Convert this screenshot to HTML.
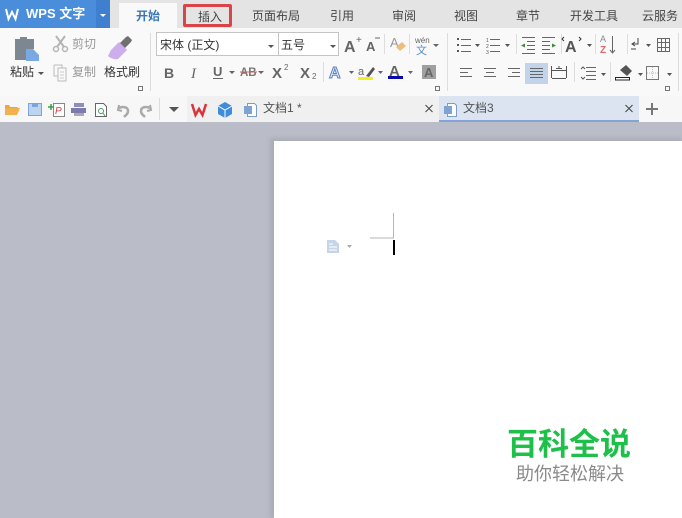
<!DOCTYPE html>
<html><head><meta charset="utf-8">
<style>
*{margin:0;padding:0;box-sizing:border-box}
html,body{width:682px;height:518px;overflow:hidden;background:#babdc8;font-family:"Liberation Sans","Noto Sans CJK SC",sans-serif}
.a{position:absolute}
.t{position:absolute;white-space:nowrap;font-size:12px;line-height:14px;color:#444}
svg{position:absolute;left:0;top:0}
#w{position:absolute;left:0;top:0;width:682px;height:518px;filter:blur(.3px)}
</style></head><body><div id="w">
<div class="a" style="left:0;top:0;width:682px;height:28px;background:#e4e4e4"></div>
<div class="a" style="left:0;top:0;width:96px;height:28px;background:#4a8ddb"></div>
<div class="a" style="left:96px;top:0;width:14px;height:28px;background:#3f7fcf"></div>
<div class="a" style="left:119px;top:3px;width:58px;height:25px;background:#f9f9f9"></div>
<div class="a" style="left:183px;top:4px;width:49px;height:23px;border:3px solid #d9434a;border-radius:2px;background:#e4e4e4"></div>
<div class="a" style="left:0;top:28px;width:682px;height:68px;background:#f9f9f9"></div>
<div class="a" style="left:157px;top:33px;width:181px;height:22px;background:#fff"></div>
<div class="a" style="left:0;top:96px;width:682px;height:26px;background:#f7f7f7"></div>
<div class="a" style="left:187px;top:96px;width:252px;height:26px;background:#f0f0f0"></div>
<div class="a" style="left:439px;top:96px;width:200px;height:26px;background:#dbe4f0;border-bottom:2px solid #86a3d8"></div>
<div class="a" style="left:0;top:122px;width:682px;height:396px;background:#babdc8"></div>
<div class="a" style="left:270px;top:138px;width:412px;height:380px;background:#a9acb5;filter:blur(2px)"></div>
<div class="a" style="left:274px;top:141px;width:408px;height:377px;background:#fff"></div>

<div class="t" style="left:26px;top:7px;color:#fff;font-size:13px;font-weight:bold">WPS 文字</div>
<div class="t" style="left:136px;top:9px;color:#3a76b8;font-weight:bold">开始</div>
<div class="t" style="left:198px;top:10px">插入</div>
<div class="t" style="left:252px;top:9px">页面布局</div>
<div class="t" style="left:330px;top:9px">引用</div>
<div class="t" style="left:392px;top:9px">审阅</div>
<div class="t" style="left:454px;top:9px">视图</div>
<div class="t" style="left:516px;top:9px">章节</div>
<div class="t" style="left:570px;top:9px">开发工具</div>
<div class="t" style="left:642px;top:9px">云服务</div>

<div class="t" style="left:10px;top:65px;color:#333">粘贴</div>
<div class="t" style="left:72px;top:37px;color:#999">剪切</div>
<div class="t" style="left:72px;top:65px;color:#999">复制</div>
<div class="t" style="left:104px;top:65px;color:#333">格式刷</div>
<div class="t" style="left:160px;top:38px;color:#333">宋体 (正文)</div>
<div class="t" style="left:281px;top:38px;color:#333">五号</div>
<div class="t" style="left:263px;top:101px;color:#555;font-size:12px">文档1 *</div>
<div class="t" style="left:463px;top:101px;color:#555;font-size:12px">文档3</div>
<div class="t" style="left:507px;top:426px;color:#1fc04a;font-size:31px;line-height:38px;font-weight:bold">百科全说</div>
<div class="t" style="left:516px;top:464px;color:#8a8a8a;font-size:18px;line-height:20px">助你轻松解决</div>

<svg width="682" height="518" viewBox="0 0 682 518" fill="none">
<!-- WPS logo -->
<path d="M6 9l2.500 10 3.500-7 3.500 7L18 9" stroke="#fff" stroke-width="2"/>
<path d="M100 14h6l-3 3z" fill="#fff"/>
<!-- font boxes -->
<rect x="156.500" y="32.500" width="122" height="23" stroke="#c4c4c4"/>
<rect x="278.500" y="32.500" width="60" height="23" stroke="#c4c4c4"/>
<path d="M268 45h6l-3 3zM330 45h6l-3 3zM38 72h6l-3 3z" fill="#555"/>
<!-- paste -->
<path d="M15 39h5v-2h7v2h7v10h-8v11h-11z" fill="#7d8791"/>
<path d="M26 49h7l6 6v6h-13z" fill="#7aa8e2"/>
<!-- scissors -->
<path d="M56 36l8 11M65 36l-8 11" stroke="#b4b4b4" stroke-width="2"/>
<circle cx="56" cy="49" r="2.500" stroke="#b4b4b4" stroke-width="1.500"/><circle cx="65" cy="49" r="2.500" stroke="#b4b4b4" stroke-width="1.500"/>
<!-- copy -->
<path d="M54 65h8v3M54 65v11h4M58 68h8v13h-8z" stroke="#bbb"/>
<path d="M60 72h4M60 75h4M60 78h4" stroke="#ccc"/>
<!-- brush -->
<path d="M111 50l8-8 8 8-9 9c-3 1-8-1-10-3z" fill="#cdadec"/>
<path d="M120 43l6-6 2-1 4 4-1 2-6 6z" fill="#707070"/>
<!-- dialog corners -->
<path d="M138.500 86.500h4v4h-4zM435.500 86.500h4v4h-4zM665.500 86.500h4v4h-4z" stroke="#777"/>
<!-- separators -->
<path d="M150.500 33v58M447.500 33v58M678.500 33v58M384.500 34v20M409.500 34v20M323.500 62v20" stroke="#ddd"/>
<path d="M516.500 34v20M561.500 34v20M595.500 34v20M627.500 34v20M574.500 62v20M610.500 62v20" stroke="#ddd"/>
<!-- B I U -->
<text x="164" y="78" font-family="Liberation Sans" font-size="14" font-weight="bold" fill="#666">B</text>
<text x="191" y="78" font-family="Liberation Serif" font-size="15" font-style="italic" fill="#666">I</text>
<text x="213" y="76" font-family="Liberation Sans" font-size="13" font-weight="bold" fill="#666">U</text>
<path d="M213 78.500h10" stroke="#666"/>
<path d="M229 71h6l-3 3zM258 71h6l-3 3z" fill="#666"/>
<text x="240" y="76" font-family="Liberation Sans" font-size="11.500" font-weight="bold" fill="#777">AB</text>
<path d="M240 72h17" stroke="#c66"/>
<text x="272" y="78" font-family="Liberation Sans" font-size="15" font-weight="bold" fill="#666">X</text>
<text x="284" y="70" font-family="Liberation Sans" font-size="8" fill="#666">2</text>
<text x="300" y="78" font-family="Liberation Sans" font-size="15" font-weight="bold" fill="#666">X</text>
<text x="312" y="79" font-family="Liberation Sans" font-size="8" fill="#666">2</text>
<!-- A+ A- -->
<text x="344" y="52" font-family="Liberation Sans" font-size="16" font-weight="bold" fill="#666">A</text>
<text x="356" y="43" font-family="Liberation Sans" font-size="10" fill="#666">+</text>
<text x="366" y="51" font-family="Liberation Sans" font-size="13" font-weight="bold" fill="#666">A</text>
<path d="M375 38h5" stroke="#666"/>
<text x="390" y="47" font-family="Liberation Sans" font-size="13" fill="#999">A</text>
<path d="M396 47l6-5 4 4-6 5z" fill="#eebc7c"/>
<text x="415" y="43" font-family="Liberation Sans" font-size="8" fill="#666">wén</text>
<text x="416" y="54" font-family="Liberation Sans,Noto Sans CJK SC" font-size="11" fill="#5a8fc8">文</text>
<path d="M433 44h6l-3 3zM349 71h5l-2.500 3zM378 71h5l-2.500 3zM408 71h5l-2.500 3z" fill="#666"/>
<!-- A variants -->
<text x="329" y="78" font-family="Liberation Sans" font-size="16" font-weight="bold" fill="#dfe8f6" stroke="#5d84c4" stroke-width="1">A</text>
<text x="358" y="75" font-family="Liberation Sans" font-size="11" fill="#666">a</text>
<path d="M366 76l7-9 2 2-6 8z" fill="#555"/>
<rect x="358" y="77" width="15" height="3" fill="#f0f020"/>
<text x="389" y="76" font-family="Liberation Sans" font-size="15" font-weight="bold" fill="#666">A</text>
<rect x="388" y="76" width="15" height="3" fill="#0a0aa8"/>
<rect x="422" y="65" width="14" height="14" fill="#a0a0a0"/>
<text x="424" y="77" font-family="Liberation Sans" font-size="13" font-weight="bold" fill="#666">A</text>
<!-- lists -->
<path d="M457 38h2v2h-2zM457 44h2v2h-2zM457 50h2v2h-2z" fill="#555"/>
<path d="M461 39.500h10M461 45.500h10M461 51.500h10M490 39.500h10M490 45.500h10M490 51.500h10" stroke="#666"/>
<text x="486" y="42" font-family="Liberation Sans" font-size="5" fill="#555">1</text>
<text x="486" y="48" font-family="Liberation Sans" font-size="5" fill="#555">2</text>
<text x="486" y="54" font-family="Liberation Sans" font-size="5" fill="#555">3</text>
<path d="M475 44h5l-2.500 3zM505 44h5l-2.500 3zM587 44h5l-2.500 3zM646 44h5l-2.500 3z" fill="#555"/>
<!-- indents -->
<path d="M522 37.500h13M527 41.500h8M527 45.500h8M527 49.500h8M522 53.500h13M542 37.500h13M542 41.500h8M542 45.500h8M542 49.500h8M542 53.500h13" stroke="#666"/>
<path d="M521 45.500l4-2v4zM556 45.500l-4-2v4z" fill="#3a8a3a"/>
<text x="565" y="52" font-family="Liberation Sans" font-size="16" font-weight="bold" fill="#555">A</text>
<path d="M564 37l-2 2 2 2M579 37l2 2-2 2" stroke="#333"/>
<text x="600" y="42" font-family="Liberation Sans" font-size="9" fill="#888">A</text>
<text x="600" y="53" font-family="Liberation Sans" font-size="10" font-weight="bold" fill="#e06a6a">Z</text>
<path d="M612.500 36v17M610 50l2.500 3 2.500-3" stroke="#666"/>
<path d="M638 38v6h-5M635 42l-3 2 3 2M631 49h5" stroke="#444"/>
<path d="M657.500 38.500h12v13h-12zM661.500 38.500v13M665.500 38.500v13M657.500 42.500h12M657.500 47.500h12" stroke="#666"/>
<!-- aligns -->
<rect x="525" y="63" width="23" height="21" fill="#c2d3ea"/>
<path d="M460 68.500h12M460 72.500h8M460 76.500h12M484 68.500h12M486 72.500h8M484 76.500h12M508 68.500h12M512 72.500h8M508 76.500h12M530 68.500h13M530 71.500h13M530 74.500h13M530 77.500h13" stroke="#666"/>
<path d="M551.500 66v12M566.500 66v12M552 78.500h14M552 70.500h14" stroke="#555"/>
<path d="M559 66v3M556 68.500h6" stroke="#555"/>
<path d="M586 67.500h10M586 71.500h10M586 75.500h10M586 79.500h10" stroke="#666"/>
<path d="M581 69l2-2 2 2M581 77l2 2 2-2" stroke="#555"/>
<path d="M601 73h5l-2.500 3zM638 73h5l-2.500 3zM667 73h5l-2.500 3z" fill="#555"/>
<!-- fill & borders -->
<path d="M620 70l6-5 6 6-5 5z" fill="#555"/>
<rect x="615.500" y="77.500" width="14" height="2.500" fill="#fff" stroke="#222"/>
<rect x="646.500" y="66.500" width="12" height="13" stroke="#777"/>
<path d="M652.500 67v12M647 73h11" stroke="#bbb" stroke-dasharray="1 1"/>
<!-- qat -->
<path d="M5 105h4l1 2h8l-1 2h-12z" fill="#eda43e"/><path d="M5 108h15l-3 7H5z" fill="#f2b04f"/>
<rect x="28.500" y="103.500" width="13" height="12" fill="#bcd4f0" stroke="#7ba6dc"/>
<path d="M32 104h6v3h-6z" fill="#7ba6dc"/>
<path d="M53.500 103.500h11v13h-11z" stroke="#888" fill="#fff"/>
<path d="M48 107h6M51 104v6" stroke="#3aa04a" stroke-width="1.500"/>
<text x="55" y="114" font-family="Liberation Sans" font-size="10" font-style="italic" fill="#d04040">P</text>
<path d="M74 103h10v4h-10z" fill="#8d8dbf"/><rect x="71" y="108" width="15" height="5" fill="#7b7bb0"/><rect x="74" y="113" width="10" height="3" fill="#aaa"/>
<path d="M95.500 103.500h8l3 3v10h-11z" stroke="#666" fill="#fff"/>
<circle cx="101" cy="111" r="2.500" stroke="#4a9a5a"/><path d="M103 113l2 3" stroke="#4a9a5a"/>
<path d="M119 105l-1 5 4 1" stroke="#aaa" stroke-width="2"/><path d="M119 108c4-2 9-1 9 3 0 3-2 4-4 6" stroke="#aaa" stroke-width="2.500"/>
<path d="M150 105l1 5-4 1" stroke="#aaa" stroke-width="2"/><path d="M150 108c-4-2-9-1-9 3 0 3 2 4 4 6" stroke="#aaa" stroke-width="2.500"/>
<path d="M159.500 98v22" stroke="#ddd"/>
<path d="M169 107h10l-5 5z" fill="#555"/>
<path d="M192 104l3.500 11 3.500-6 3.500 6 3.500-11" stroke="#d9333c" stroke-width="2.500"/>
<path d="M218 106l7-4 7 4v8l-7 4-7-4z" fill="#3f8bdc"/>
<path d="M218 106l7 4 7-4M225 110v8" stroke="#fff"/>
<!-- doc tabs -->
<path d="M247.500 103.500h7l2 2v11h-9z" stroke="#7a9cc8" fill="#fff"/>
<rect x="244" y="106" width="8" height="8" fill="#7da3d0"/>
<path d="M447.500 103.500h7l2 2v11h-9z" stroke="#7a9cc8" fill="#fff"/>
<rect x="444" y="106" width="8" height="8" fill="#7da3d0"/>
<path d="M425.500 105l7 7M432.500 105l-7 7M625.500 105l7 7M632.500 105l-7 7" stroke="#444"/>
<path d="M652 103v12M646 109h12" stroke="#777" stroke-width="2"/>
<!-- document marks -->
<path d="M393.500 213v25M370 238h24" stroke="#b5b5b5"/>
<path d="M394 240v15" stroke="#000" stroke-width="2"/>
<path d="M327 240h8l4 4v9h-12z" fill="#c5d4e6"/>
<path d="M329 244h4M329 247h8M329 250h8" stroke="#fff"/>
<path d="M347 245h5l-2.500 3z" fill="#aaa"/>
</svg>
</div></body></html>
